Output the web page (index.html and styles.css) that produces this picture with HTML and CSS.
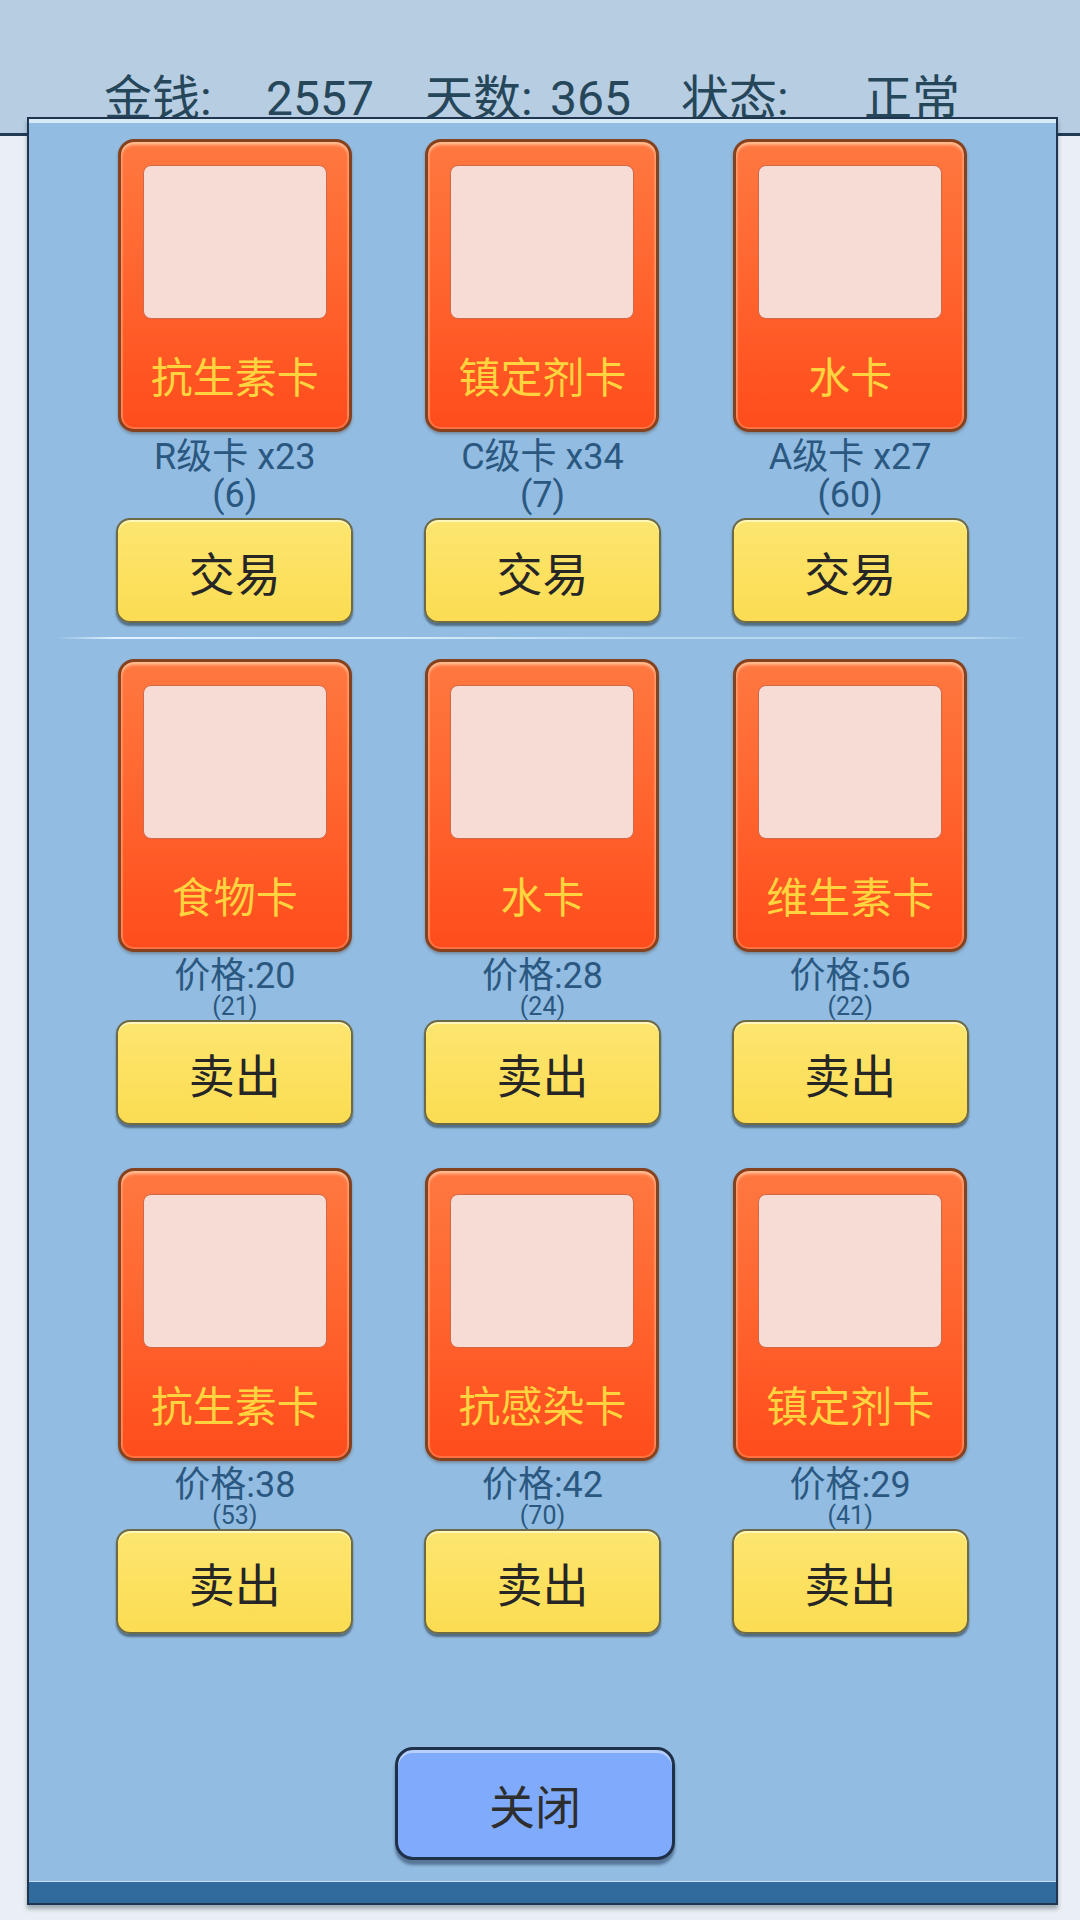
FILE: index.html
```html
<!DOCTYPE html>
<html lang="zh-CN">
<head>
    <meta charset="UTF-8">
    <meta name="viewport" content="width=device-width, initial-scale=1.0">
    <title>卡牌商店</title>
    <link rel="stylesheet" href="styles.css">
</head>
<body>

<div class="topbar">
    <span class="stat stat-money">金钱:</span>
    <span class="stat stat-money-val">2557</span>
    <span class="stat stat-day">天数:</span>
    <span class="stat stat-day-val">365</span>
    <span class="stat stat-state">状态:</span>
    <span class="stat">正常</span>
</div>

<div class="panel">
    <!-- trade row -->
    <div class="card-grid trade-grid">
        <div class="slot">
            <div class="card"><div class="card-pic"></div><div class="card-name">抗生素卡</div></div>
            <div class="info"><div class="info-main">R级卡 x23</div><div class="info-main">(6)</div></div>
            <button class="btn-yellow">交易</button>
        </div>
        <div class="slot">
            <div class="card"><div class="card-pic"></div><div class="card-name">镇定剂卡</div></div>
            <div class="info"><div class="info-main">C级卡 x34</div><div class="info-main">(7)</div></div>
            <button class="btn-yellow">交易</button>
        </div>
        <div class="slot">
            <div class="card"><div class="card-pic"></div><div class="card-name">水卡</div></div>
            <div class="info"><div class="info-main">A级卡 x27</div><div class="info-main">(60)</div></div>
            <button class="btn-yellow">交易</button>
        </div>
    </div>

    <div class="divider"></div>

    <!-- sell rows -->
    <div class="card-grid sell-grid">
        <div class="slot">
            <div class="card"><div class="card-pic"></div><div class="card-name">食物卡</div></div>
            <div class="info"><div class="info-main">价格:20</div><div class="info-sub">(21)</div></div>
            <button class="btn-yellow">卖出</button>
        </div>
        <div class="slot">
            <div class="card"><div class="card-pic"></div><div class="card-name">水卡</div></div>
            <div class="info"><div class="info-main">价格:28</div><div class="info-sub">(24)</div></div>
            <button class="btn-yellow">卖出</button>
        </div>
        <div class="slot">
            <div class="card"><div class="card-pic"></div><div class="card-name">维生素卡</div></div>
            <div class="info"><div class="info-main">价格:56</div><div class="info-sub">(22)</div></div>
            <button class="btn-yellow">卖出</button>
        </div>
        <div class="slot">
            <div class="card"><div class="card-pic"></div><div class="card-name">抗生素卡</div></div>
            <div class="info"><div class="info-main">价格:38</div><div class="info-sub">(53)</div></div>
            <button class="btn-yellow">卖出</button>
        </div>
        <div class="slot">
            <div class="card"><div class="card-pic"></div><div class="card-name">抗感染卡</div></div>
            <div class="info"><div class="info-main">价格:42</div><div class="info-sub">(70)</div></div>
            <button class="btn-yellow">卖出</button>
        </div>
        <div class="slot">
            <div class="card"><div class="card-pic"></div><div class="card-name">镇定剂卡</div></div>
            <div class="info"><div class="info-main">价格:29</div><div class="info-sub">(41)</div></div>
            <button class="btn-yellow">卖出</button>
        </div>
    </div>

    <button class="btn-close">关闭</button>
    <div class="panel-foot"></div>
</div>

</body>
</html>
```

FILE: styles.css
```css
body {
    margin: 0;
    background-color: #e9eff4;
    font-family: Roboto, "Noto Sans CJK SC", sans-serif;
    width: 1080px;
    height: 1920px;
    overflow: hidden;
}

.topbar {
    display: flex;
    align-items: flex-start;
    box-sizing: border-box;
    height: 136px;
    padding: 75px 0 0 104px;
    background-color: #b7cde2;
    border-bottom: 3px solid #213a56;
}

.stat {
    font-size: 48px;
    line-height: 48px;
    color: #26465a;
    white-space: nowrap;
}

.stat-money { width: 162px; }
.stat-money-val { width: 159px; }
.stat-day { width: 125px; }
.stat-day-val { width: 131px; }
.stat-state { width: 183px; }

.panel {
    position: relative;
    z-index: 1;
    display: flex;
    flex-direction: column;
    box-sizing: border-box;
    width: 1031px;
    height: 1788px;
    margin: -19px 0 0 27px;
    padding-top: 20px;
    background-color: #92bce1;
    border: 2px solid #1f3550;
    box-shadow: inset 0 4px 0 #d6eaf8, 0 4px 4px rgba(20, 40, 60, 0.35);
}

.card-grid {
    display: grid;
    grid-template-columns: repeat(3, 1fr);
    padding: 0 52px;
}

.sell-grid {
    row-gap: 43px;
}

.slot {
    display: flex;
    flex-direction: column;
    align-items: center;
}

.card {
    display: flex;
    flex-direction: column;
    box-sizing: border-box;
    width: 234px;
    height: 293px;
    padding: 23px 22px 0;
    border: 3px solid #84421f;
    border-radius: 16px;
    background: linear-gradient(#ff7840 0%, #ff6630 45%, #ff4c1c 100%);
    box-shadow: inset 0 3px 3px rgba(255, 200, 160, 0.8), inset 0 0 0 2px rgba(255, 150, 100, 0.5), 0 2px 3px rgba(60, 30, 10, 0.3);
}

.card-pic {
    height: 152px;
    border: 1px solid #d0684a;
    border-radius: 8px;
    background-color: #f6dcd4;
}

.card-name {
    flex: 1;
    display: flex;
    align-items: center;
    justify-content: center;
    font-family: "Noto Sans CJK SC", sans-serif;
    font-size: 42px;
    color: #ffd43e;
}

.info {
    margin-top: 6px;
    text-align: center;
    color: #2b5880;
}

.info-main {
    font-size: 36px;
    line-height: 38px;
}

.sell-grid .info-main {
    line-height: 36px;
}

.info-sub {
    font-size: 25px;
    line-height: 26px;
}

.trade-grid .btn-yellow {
    margin-top: 4px;
}

.sell-grid .btn-yellow {
    margin-top: 0;
}

.btn-yellow {
    width: 237px;
    height: 105px;
    border: 2px solid #6d6a48;
    border-radius: 14px;
    background: linear-gradient(#fde670, #fbdc52);
    box-shadow: inset 0 2px 0 #fff6bc, 0 3px 2px rgba(30, 45, 60, 0.55);
    font-family: "Noto Sans CJK SC", sans-serif;
    font-size: 46px;
    color: #262626;
    padding: 0;
}

.divider {
    height: 2px;
    margin: 14px 27px 20px 27px;
    background: linear-gradient(90deg, rgba(200, 230, 250, 0) 0%, #dff2ff 6%, #d4ecfb 35%, #b6d8f0 60%, #b6d8f0 94%, rgba(180, 215, 240, 0) 100%);
}

.btn-close {
    align-self: flex-start;
    margin: auto 0 21px 366px;
    width: 280px;
    height: 113px;
    border: 3px solid #1e3148;
    border-radius: 18px;
    background-color: #80abfc;
    box-shadow: inset 0 3px 0 #b8d0ff, 0 5px 3px rgba(30, 50, 80, 0.5);
    font-family: "Noto Sans CJK SC", sans-serif;
    font-size: 46px;
    color: #2e2e2e;
    padding: 0;
}

.panel-foot {
    height: 21px;
    border-top: 1px solid #c6def0;
    background-color: #316a9c;
}
```
